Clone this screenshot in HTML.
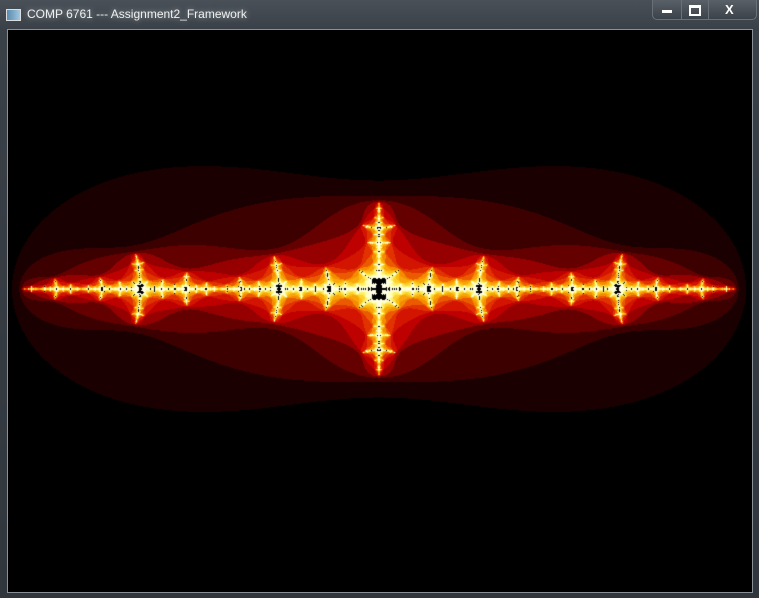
<!DOCTYPE html>
<html><head><meta charset="utf-8"><style>
html,body{margin:0;padding:0;background:#000;}
#w{position:relative;width:759px;height:598px;overflow:hidden;background:linear-gradient(#4a5058,#3a4047 30px,#30363c);}
#t{position:absolute;left:27px;top:7px;font:12px "Liberation Sans",sans-serif;color:#f0f0f0;text-shadow:0 0 6px #9aa;}
#ic{position:absolute;left:6px;top:9px;width:13px;height:10px;background:linear-gradient(90deg,#5a8ab0,#a0c8e0);border:1px solid #ddd;}
#btns{position:absolute;left:652px;top:0;width:103px;height:19px;border:1px solid #6a7078;border-top:none;border-radius:0 0 5px 5px;background:linear-gradient(#5a6068,#3c4249);}
.b{position:absolute;top:0;height:19px;border-right:1px solid #6a7078;}
#c{position:absolute;left:7px;top:29px;border:1px solid #8a9098;}
canvas{display:block;}
</style></head><body><div id="w">
<div id="ic"></div><div id="t">COMP 6761 --- Assignment2_Framework</div>
<div id="btns"><div class="b" style="left:0;width:28px"><div style="position:absolute;left:9px;top:10px;width:10px;height:3px;background:#fff"></div></div><div class="b" style="left:29px;width:26px"><div style="position:absolute;left:7px;top:5px;width:8px;height:6px;border:2px solid #fff;border-top-width:3px"></div></div><div style="position:absolute;left:72px;top:2px;color:#fff;font:bold 13px 'Liberation Sans',sans-serif">X</div></div>
<div id="c"><canvas id="cv" width="744" height="562"></canvas></div>
</div>
<script>
var cv=document.getElementById('cv'),ctx=cv.getContext('2d'),W=744,H=562;
var img=ctx.createImageData(W,H),d=img.data;
var keys=[[0,0,0,0],[1,26,0,0],[2,60,0,0],[3,100,0,0],[4,150,0,0],[5,190,0,0],[6,210,20,0],[7,225,50,0],[8,235,90,0],[9,245,140,0],[11,250,190,20],[13,255,230,80],[16,255,255,170],[20,255,255,230]];
function col(n){
 for(var k=0;k<keys.length-1;k++){var a=keys[k],b=keys[k+1];if(n>=a[0]&&n<b[0]){var t=(n-a[0])/(b[0]-a[0]);return [a[1]+(b[1]-a[1])*t,a[2]+(b[2]-a[2])*t,a[3]+(b[3]-a[3])*t];}}
 return [255,255,230];
}
var cr=-1.47,ci=0,R2=4,Sx=197,Sy=149,cx=371,cy=259,MAX=28;
for(var py=0;py<H;py++)for(var px=0;px<W;px++){
 var x=(px-cx+0.5)/Sx,y=(py-cy+0.5)/Sy,n=0,inside=true;
 for(n=0;n<MAX;n++){var xx=x*x-y*y+cr;y=2*x*y+ci;x=xx;if(x*x+y*y>R2){inside=false;break;}}
 var c=inside?[0,0,0]:col(n);
 var i=(py*W+px)*4;d[i]=c[0];d[i+1]=c[1];d[i+2]=c[2];d[i+3]=255;
}
ctx.putImageData(img,0,0);
</script>
</body></html>
